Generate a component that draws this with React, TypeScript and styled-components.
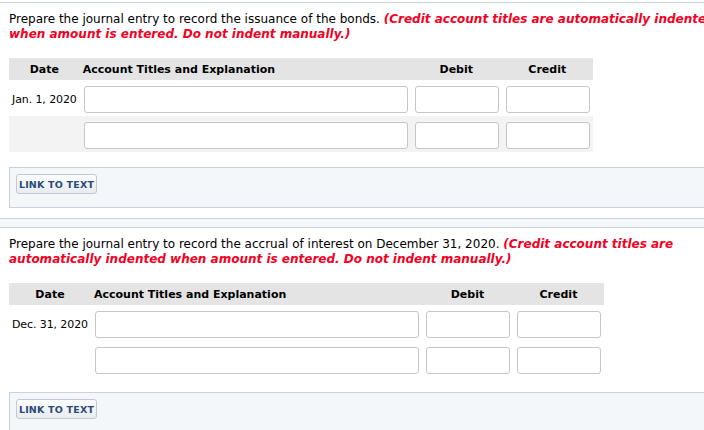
import React from "react";
import styled, { createGlobalStyle } from "styled-components";

const Global = createGlobalStyle`
  html, body { margin: 0; padding: 0; background: #fff; overflow: hidden; }
  body { font-family: Verdana, "DejaVu Sans", sans-serif; font-size: 12px; color: #000; }
`;

const Page = styled.div`
  width: 760px;
`;

const TopRule = styled.div`
  height: 2px;
  border-bottom: 1px solid #c9d1dd;
`;

const Divider = styled.div`
  height: 8px;
  margin-top: 10px;
  background: #f4f7fa;
  border-top: 1px solid #c9d1dd;
  border-bottom: 1px solid #c9d1dd;
`;

const Section = styled.section`
  padding-top: 9px;
`;

const Prompt = styled.p`
  margin: 0 0 0 9px;
  line-height: 15px;
  white-space: nowrap;
`;

const Note = styled.em`
  color: #f3001f;
  font-weight: bold;
  font-style: italic;
`;

const Journal = styled.table`
  margin: 16px 0 0 9px;
  border-collapse: collapse;
  border-spacing: 0;
  font-size: 11px;
`;

const HeadCell = styled.th<{ $align?: string }>`
  height: 22px;
  padding: 0 3px;
  background: #e4e4e4;
  font-weight: bold;
  text-align: ${(p) => p.$align || "center"};
`;

const Row = styled.tr<{ $shade?: boolean }>`
  background: ${(p) => (p.$shade ? "#f3f3f3" : "#fff")};
`;

const Cell = styled.td`
  padding: 6px 3px 3px 4px;
  vertical-align: middle;
  white-space: nowrap;
`;

const DateCell = styled(Cell)`
  padding-left: 3px;
  letter-spacing: -0.1px;
`;

const Field = styled.input<{ $w: number }>`
  display: block;
  box-sizing: border-box;
  width: ${(p) => p.$w}px;
  height: 27px;
  margin: 0;
  border: 1px solid #c6c6c6;
  border-radius: 3px;
  background: #fff;
  font: inherit;
`;

const Panel = styled.div`
  margin: 15px 0 0 9px;
  padding: 6px 6px 13px;
  background: #f4f7fa;
  border: 1px solid #c9d1dd;
`;

const LinkButton = styled.button`
  display: block;
  height: 20px;
  width: 81px;
  padding: 0;
  border: 1px solid #c3c9d0;
  border-radius: 3px;
  background: linear-gradient(#fbfcfd, #e8ecf0);
  color: #2c4a78;
  font-family: Verdana, "DejaVu Sans", sans-serif;
  font-size: 9.5px;
  font-weight: bold;
  letter-spacing: 0.2px;
  cursor: pointer;
`;

type Entry = { date: string };

function JournalTable({ dates, striped }: { dates: Entry[]; striped?: boolean }) {
  return (
    <Journal>
      <thead>
        <tr>
          <HeadCell>Date</HeadCell>
          <HeadCell $align="left">Account Titles and Explanation</HeadCell>
          <HeadCell>Debit</HeadCell>
          <HeadCell>Credit</HeadCell>
        </tr>
      </thead>
      <tbody>
        {dates.map((d, i) => (
          <Row key={i} $shade={striped && i % 2 === 1}>
            <DateCell>{d.date}</DateCell>
            <Cell>
              <Field $w={324} />
            </Cell>
            <Cell>
              <Field $w={84} />
            </Cell>
            <Cell>
              <Field $w={84} />
            </Cell>
          </Row>
        ))}
      </tbody>
    </Journal>
  );
}

export default function App() {
  return (
    <Page>
      <Global />
      <TopRule />
      <Section>
        <Prompt>
          Prepare the journal entry to record the issuance of the bonds.{" "}
          <Note>
            (Credit account titles are automatically indented
            <br />
            when amount is entered. Do not indent manually.)
          </Note>
        </Prompt>
        <JournalTable striped dates={[{ date: "Jan. 1, 2020" }, { date: "" }]} />
        <Panel>
          <LinkButton>LINK TO TEXT</LinkButton>
        </Panel>
      </Section>
      <Divider />
      <Section>
        <Prompt>
          Prepare the journal entry to record the accrual of interest on December 31, 2020.{" "}
          <Note>
            (Credit account titles are
            <br />
            automatically indented when amount is entered. Do not indent manually.)
          </Note>
        </Prompt>
        <JournalTable dates={[{ date: "Dec. 31, 2020" }, { date: "" }]} />
        <Panel>
          <LinkButton>LINK TO TEXT</LinkButton>
        </Panel>
      </Section>
    </Page>
  );
}
